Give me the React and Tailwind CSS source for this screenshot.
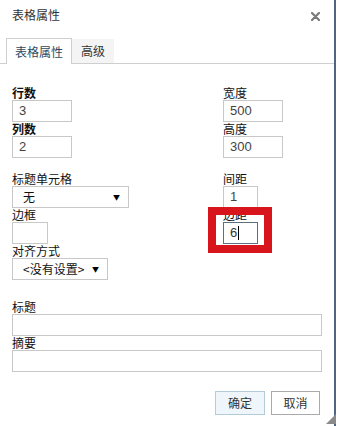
const CJK = { fontFamily: '"Noto Sans CJK SC", "Noto Sans", sans-serif' };

function Label({ children, bold }) {
  return (
    <div className={`h-[14px] text-[12px] leading-[14px] text-[#111] ${bold ? 'font-bold text-[#2a1a2a]' : ''}`}>
      {children}
    </div>
  );
}

function Field({ value, w, focused }) {
  return (
    <div
      className={`h-[22px] ${w} border bg-white flex items-center pl-[6px] text-[13px] ${focused ? 'border-[#5c6f80] text-[#333]' : 'border-[#c8c8c8] text-[#444]'}`}
      style={{ fontFamily: '"Liberation Sans", Arial, sans-serif' }}
    >
      {value}
      {focused && <span className="ml-[1px] w-[1px] h-[14px] bg-black" />}
    </div>
  );
}

function Select({ value, w }) {
  return (
    <div className={`h-[22px] ${w} border border-[#c8c8c8] bg-white flex items-center justify-between pl-[10px] pr-[8px] text-[12px] text-[#111]`}>
      <span>{value}</span>
      <span className="text-[7px] text-black">▼</span>
    </div>
  );
}

export default function App() {
  return (
    <div className="w-[338px] h-[426px] bg-white relative overflow-hidden" style={CJK}>
      <div className="w-[336px] h-full border-r-2 border-[#4f6584] flex flex-col">

        {/* Header */}
        <div className="h-[38px] flex items-start justify-between pl-[12px] pr-[14px] pt-[7px]">
          <span className="text-[12px] leading-[16px] text-[#333]">表格属性</span>
          <svg width="9" height="9" viewBox="0 0 9 9" className="mt-[5px]">
            <path d="M1 1 L8 8 M8 1 L1 8" stroke="#7a7a7a" strokeWidth="2.2" strokeLinecap="round" />
          </svg>
        </div>

        {/* Tabs */}
        <div className="h-[26px] flex items-end border-b border-[#cfcfcf] pl-[6px]">
          <div className="h-[26px] px-[8px] flex items-center border border-b-0 border-[#cfcfcf] bg-white -mb-px text-[12px] text-[#2f4a5e]">
            表格属性
          </div>
          <div className="h-[24px] px-[9px] flex items-center bg-[#f4f4f4] text-[12px] text-[#333]">
            高级
          </div>
        </div>

        {/* Rows / size */}
        <div className="flex pl-[12px] pt-[22px]">
          <div className="w-[211px]">
            <Label bold>行数</Label>
            <Field value="3" w="w-[60px]" />
            <Label bold>列数</Label>
            <Field value="2" w="w-[60px]" />
          </div>
          <div>
            <Label>宽度</Label>
            <Field value="500" w="w-[60px]" />
            <Label>高度</Label>
            <Field value="300" w="w-[60px]" />
          </div>
        </div>

        {/* Header cells / borders */}
        <div className="flex pl-[12px] pt-[14px]">
          <div className="w-[211px]">
            <Label>标题单元格</Label>
            <Select value="无" w="w-[117px]" />
            <Label>边框</Label>
            <Field value="" w="w-[36px]" />
            <Label>对齐方式</Label>
            <Select value="<没有设置>" w="w-[96px]" />
          </div>
          <div>
            <Label>间距</Label>
            <Field value="1" w="w-[35px]" />
            <div className="relative">
              <Label>边距</Label>
              <Field value="6" w="w-[35px]" focused />
              <div className="absolute left-[-15px] top-[-1px] w-[64px] h-[46px] border-[8px] border-[#d8141c]" />
            </div>
          </div>
        </div>

        {/* Caption / summary */}
        <div className="pl-[12px] pr-[14px] pt-[20px]">
          <Label>标题</Label>
          <Field value="" w="w-[310px]" />
          <Label>摘要</Label>
          <Field value="" w="w-[310px]" />
        </div>

        {/* Buttons */}
        <div className="flex justify-end gap-[6px] pr-[14px] pt-[19px]">
          <button className="h-[24px] w-[50px] border border-[#b3ccd9] bg-[#eef6fb] text-[12px] text-[#333]">确定</button>
          <button className="h-[24px] w-[49px] border border-[#aaaaaa] bg-white text-[12px] text-[#333]">取消</button>
        </div>
      </div>

      {/* resize grip */}
      <svg width="10" height="10" viewBox="0 0 10 10" className="absolute right-[2px] bottom-[2px]">
        <path d="M10 0 L10 10 L0 10 Z" fill="#8a8a8a" />
      </svg>
    </div>
  );
}
